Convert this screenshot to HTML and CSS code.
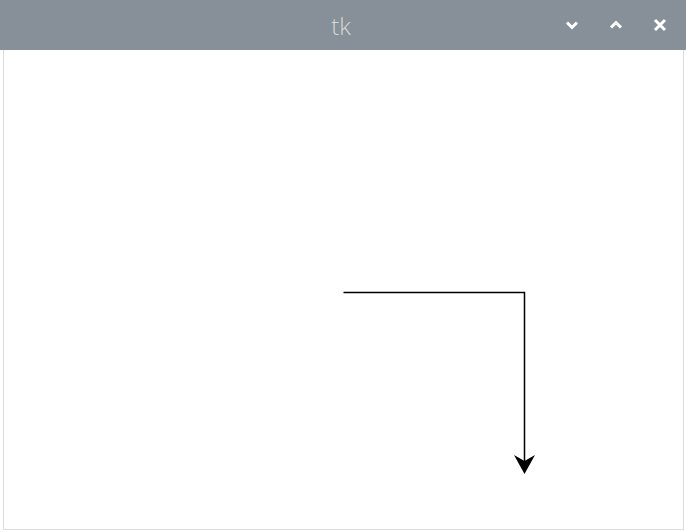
FILE: index.html
```html
<!DOCTYPE html>
<html lang="en">
<head>
    <meta charset="UTF-8">
    <title>tk</title>
    <link rel="stylesheet" href="styles.css">
</head>
<body>
    <div class="window">
        <div class="titlebar">
            <span class="title">tk</span>
            <div class="controls">
                <svg class="ctl" width="14" height="14" viewBox="0 0 14 14">
                    <polyline points="2,4.5 7,9.5 12,4.5" fill="none" stroke="#fff" stroke-width="3"/>
                </svg>
                <svg class="ctl" width="14" height="14" viewBox="0 0 14 14">
                    <polyline points="2,9.5 7,4.5 12,9.5" fill="none" stroke="#fff" stroke-width="3"/>
                </svg>
                <svg class="ctl" width="14" height="14" viewBox="0 0 14 14">
                    <path d="M2 2 L12 12 M12 2 L2 12" fill="none" stroke="#fff" stroke-width="3"/>
                </svg>
            </div>
        </div>
        <div class="canvas">
            <svg width="680" height="478" viewBox="0 0 680 478">
                <polyline points="339.5,242.5 520.5,242.5 520.5,414" fill="none" stroke="#000" stroke-width="1.5"/>
                <polygon points="510,405 520.5,411 531,405 520.5,424" fill="#000"/>
            </svg>
        </div>
    </div>
</body>
</html>
```

FILE: styles.css
```css
body {
    margin: 0;
    background-color: #fff;
    font-family: "Open Sans", "DejaVu Sans", sans-serif;
}

.window {
    width: 686px;
    height: 532px;
    display: flex;
    flex-direction: column;
    background-color: #fff;
}

.titlebar {
    height: 50px;
    background-color: #879098;
    position: relative;
    display: flex;
    align-items: center;
    justify-content: center;
}

.title {
    color: #d3d7da;
    font-size: 24px;
    font-weight: 300;
    margin-left: -4px;
}

.controls {
    position: absolute;
    right: 19px;
    top: 18px;
    display: flex;
    gap: 30px;
}

.ctl {
    display: block;
}

.canvas {
    flex: 1;
    margin: 0 2px 2px 3px;
    border: 1px solid #dcdcdc;
    border-top: none;
    overflow: hidden;
}

.canvas svg {
    display: block;
}
```
